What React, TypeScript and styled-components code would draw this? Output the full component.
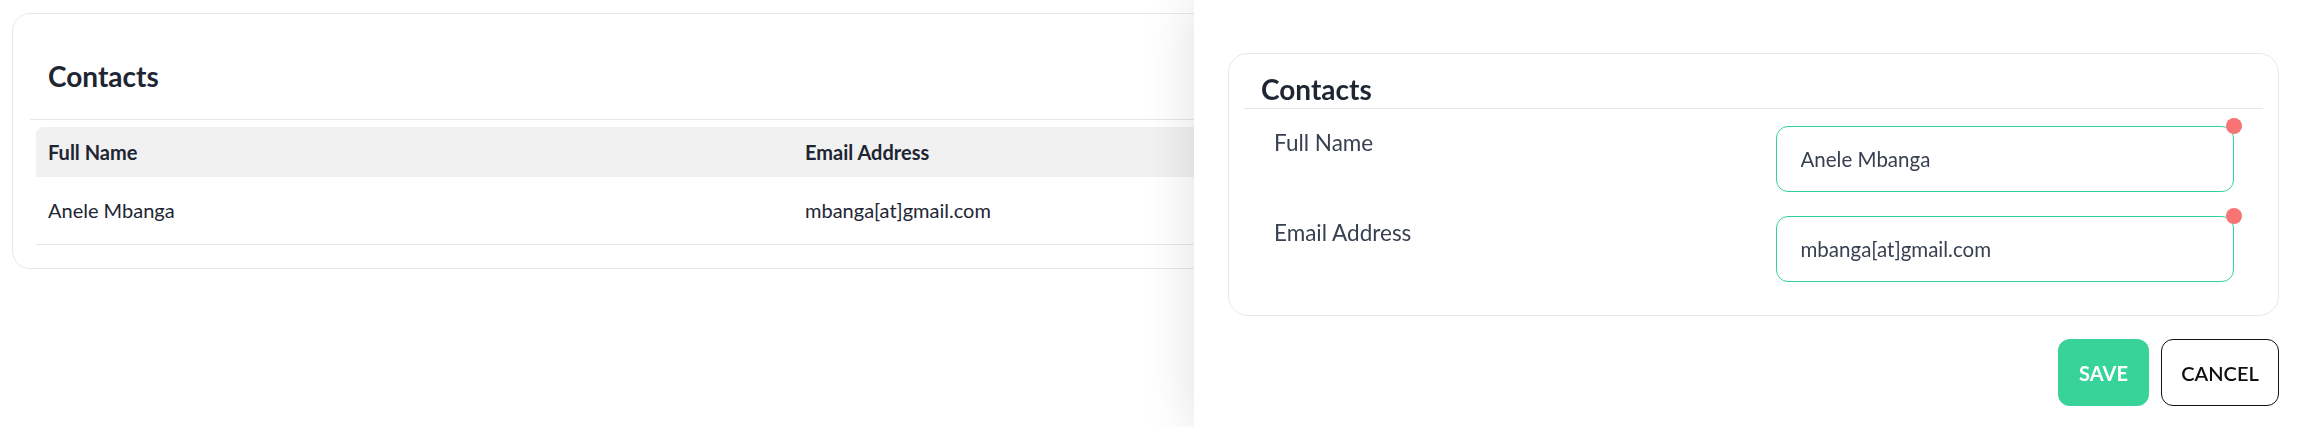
import React from "react";
import styled, { createGlobalStyle } from "styled-components";

const GlobalStyle = createGlobalStyle`
  html, body {
    margin: 0;
    padding: 0;
    background: #ffffff;
    font-family: Lato, "Open Sans", "Noto Sans", sans-serif;
    color: #1f2937;
  }
  * { box-sizing: border-box; }
`;

const Page = styled.div`
  padding: 13px 12px;
  min-height: 427px;
`;

const ListCard = styled.section`
  border: 1px solid #e5e7eb;
  border-radius: 18px;
  padding-bottom: 23px;
  background: #fff;
`;

const CardHeader = styled.div`
  margin: 0 17px;
  padding: 46px 18px 27px;
  border-bottom: 1px solid #e5e7eb;
`;

const Title = styled.h2`
  margin: 0;
  font-size: 28px;
  line-height: 32px;
  font-weight: 700;
  color: #1e2533;
`;

const Table = styled.div`
  margin: 7px 23px 0;
`;

const TableRow = styled.div<{ $head?: boolean }>`
  display: grid;
  grid-template-columns: 757px 1fr;
  height: ${(p) => (p.$head ? "50px" : "68px")};
  align-items: center;
  background: ${(p) => (p.$head ? "#f1f1f1" : "transparent")};
  border-radius: ${(p) => (p.$head ? "8px 8px 0 0" : "0")};
  border-bottom: ${(p) => (p.$head ? "none" : "1px solid #e5e7eb")};
`;

const Cell = styled.div<{ $head?: boolean }>`
  padding-left: 12px;
  font-size: 20px;
  line-height: 25px;
  font-weight: ${(p) => (p.$head ? 700 : 400)};
  color: #1e2533;
  white-space: nowrap;
`;

const Drawer = styled.aside`
  position: fixed;
  top: 0;
  right: 0;
  bottom: 0;
  width: 1104px;
  background: #ffffff;
  box-shadow: 0 0 50px rgba(0, 0, 0, 0.13);
  padding: 53px 19px 0 34px;
  display: flex;
  flex-direction: column;
`;

const FormCard = styled.div`
  border: 1px solid #e5e7eb;
  border-radius: 20px;
  padding: 19px 0 33px;
`;

const FormHeader = styled.div`
  margin: 0 15px;
  padding: 0 0 3px 17px;
  border-bottom: 1px solid #e5e7eb;
`;

const Fields = styled.div`
  display: flex;
  flex-direction: column;
  gap: 24px;
  padding: 17px 44px 0 45px;
`;

const FieldRow = styled.div`
  display: grid;
  grid-template-columns: 1fr 1fr;
  column-gap: 43px;
  align-items: start;
`;

const Label = styled.label`
  font-size: 22.5px;
  line-height: 33px;
  color: #374151;
`;

const InputWrap = styled.div`
  position: relative;
`;

const Input = styled.input`
  display: block;
  width: 100%;
  height: 66px;
  border: 1.5px solid #34d399;
  border-radius: 12px;
  padding: 0 0 0 24px;
  font-family: inherit;
  font-size: 20.5px;
  color: #374151;
  background: #fff;
  outline: none;
`;

const RequiredDot = styled.span`
  position: absolute;
  top: -8px;
  right: -8px;
  width: 16px;
  height: 16px;
  border-radius: 50%;
  background: #f87373;
`;

const Actions = styled.div`
  display: flex;
  justify-content: flex-end;
  gap: 12px;
  margin-top: 23px;
`;

const Button = styled.button<{ $primary?: boolean }>`
  height: 67px;
  min-width: ${(p) => (p.$primary ? "91px" : "118px")};
  padding: 0 18px;
  border-radius: 12px;
  font-family: inherit;
  font-size: 20px;
  font-weight: ${(p) => (p.$primary ? 700 : 600)};
  color: ${(p) => (p.$primary ? "#ffffff" : "#111111")};
  background: ${(p) => (p.$primary ? "#37d399" : "#ffffff")};
  border: ${(p) => (p.$primary ? "none" : "1.5px solid #111111")};
  cursor: pointer;
`;

const fields = [
  { label: "Full Name", value: "Anele Mbanga" },
  { label: "Email Address", value: "mbanga[at]gmail.com" },
];

export default function App() {
  return (
    <>
      <GlobalStyle />
      <Page>
        <ListCard>
          <CardHeader>
            <Title>Contacts</Title>
          </CardHeader>
          <Table>
            <TableRow $head>
              <Cell $head>Full Name</Cell>
              <Cell $head>Email Address</Cell>
            </TableRow>
            <TableRow>
              <Cell>Anele Mbanga</Cell>
              <Cell>mbanga[at]gmail.com</Cell>
            </TableRow>
          </Table>
        </ListCard>
      </Page>
      <Drawer>
        <FormCard>
          <FormHeader>
            <Title>Contacts</Title>
          </FormHeader>
          <Fields>
            {fields.map((f) => (
              <FieldRow key={f.label}>
                <Label>{f.label}</Label>
                <InputWrap>
                  <Input defaultValue={f.value} />
                  <RequiredDot />
                </InputWrap>
              </FieldRow>
            ))}
          </Fields>
        </FormCard>
        <Actions>
          <Button $primary>SAVE</Button>
          <Button>CANCEL</Button>
        </Actions>
      </Drawer>
    </>
  );
}
